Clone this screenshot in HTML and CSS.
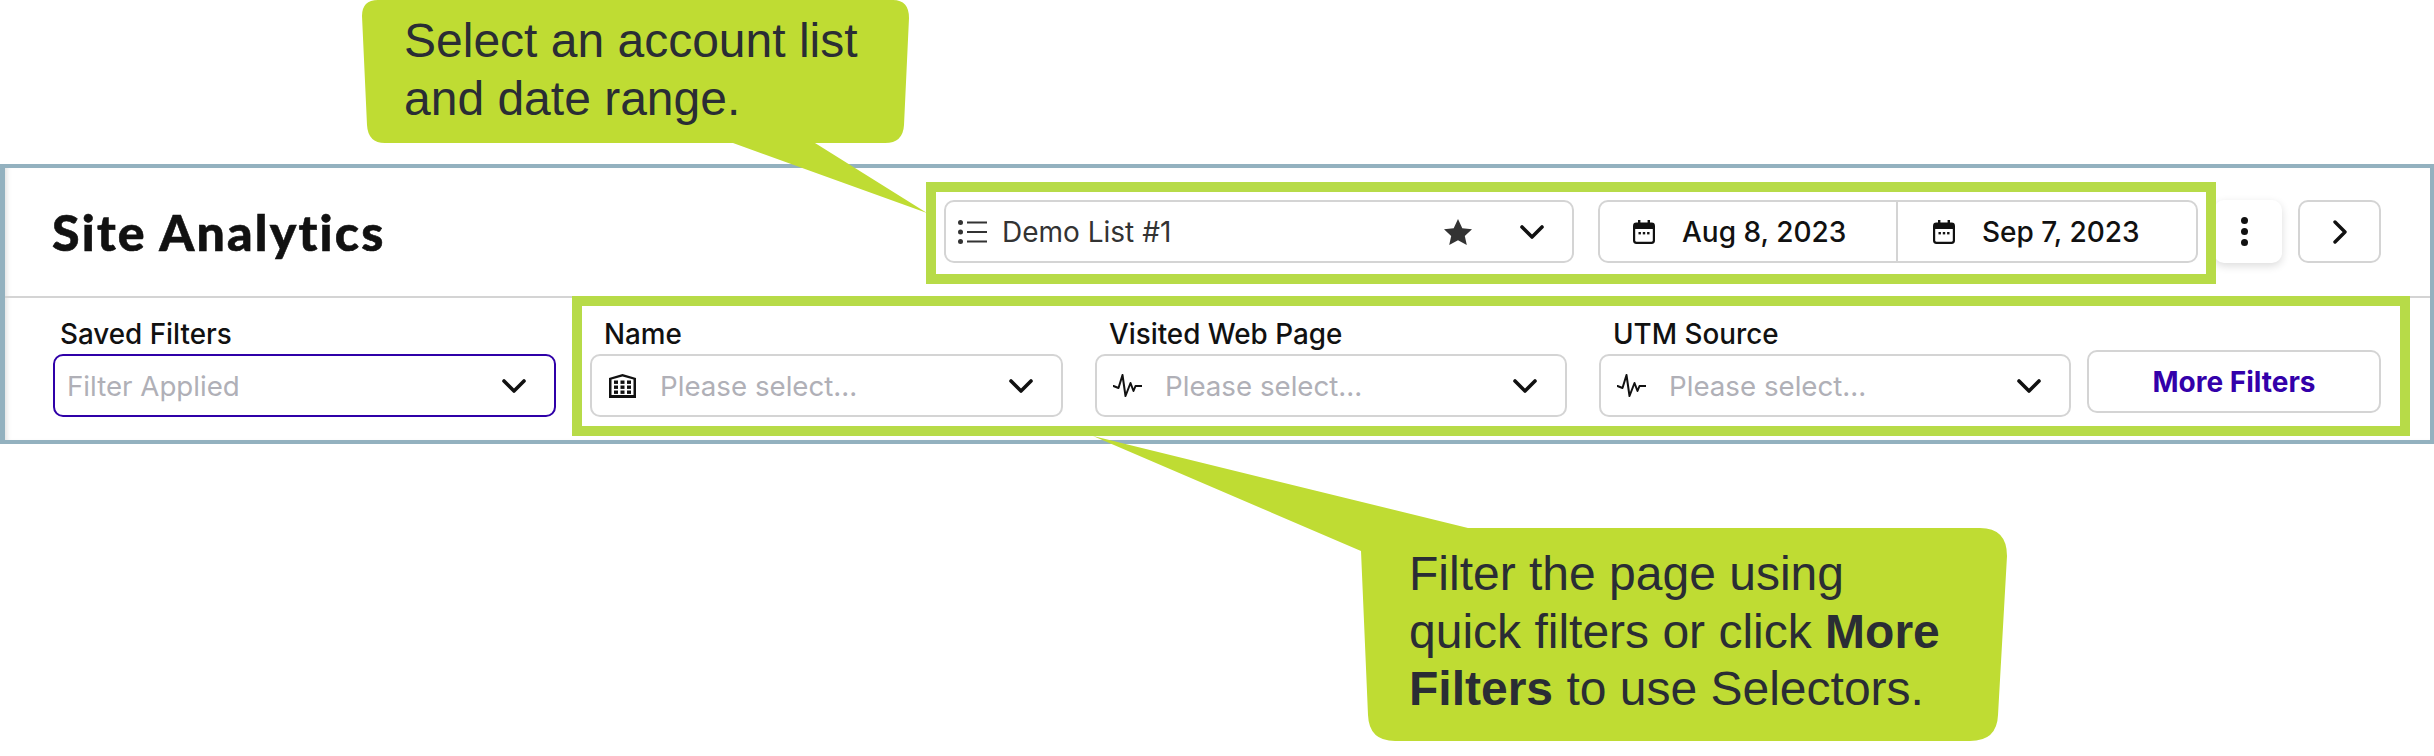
FILE: index.html
```html
<!DOCTYPE html>
<html lang="en">
<head>
<meta charset="utf-8">
<title>Site Analytics</title>
<link rel="stylesheet" href="styles.css">
</head>
<body>
<svg class="defs" width="0" height="0" aria-hidden="true">
  <symbol id="chev" viewBox="0 0 24 14"><path d="M2 2l10 10L22 2" fill="none" stroke="currentColor" stroke-width="3.6" stroke-linecap="round" stroke-linejoin="round"/></symbol>
  <symbol id="cal" viewBox="0 0 22 24"><path fill-rule="evenodd" d="M5 0h2.4v2.6h7.2V0H17v2.6h1.6A3.4 3.4 0 0 1 22 6v14.600a3.400 3.400 0 0 1-3.400 3.400H3.400A3.400 3.400 0 0 1 0 20.600V6a3.400 3.400 0 0 1 3.400-3.400H5zM2.200 9v11.600c0 .7.5 1.200 1.200 1.200h15.200c.7 0 1.200-.5 1.200-1.200V9z" fill="currentColor"/><rect x="5.500" y="12" width="2.400" height="2.400" fill="currentColor"/><rect x="9.800" y="12" width="2.400" height="2.400" fill="currentColor"/><rect x="14.100" y="12" width="2.400" height="2.400" fill="currentColor"/></symbol>
  <symbol id="pulse" viewBox="0 0 28 24"><path d="M0 12l5 2L9 1l3 21 5-13 3 8 2-5h6" fill="none" stroke="currentColor" stroke-width="2" stroke-linejoin="round" stroke-linecap="round"/></symbol>
  <symbol id="bldg" viewBox="0 0 29 24"><path fill-rule="evenodd" d="M1 24V4L14.500 0 28 4V24zM3.500 5.600V21h22V5.600L14.500 2.600z" fill="currentColor"/><g fill="currentColor"><rect x="6" y="6.500" width="4" height="3.400"/><rect x="12.500" y="6.500" width="4" height="3.400"/><rect x="19" y="6.500" width="4" height="3.400"/><rect x="6" y="11.500" width="4" height="3.400"/><rect x="12.500" y="11.500" width="4" height="3.400"/><rect x="19" y="11.500" width="4" height="3.400"/><rect x="6" y="16.500" width="4" height="3.400"/><rect x="12.500" y="16.500" width="4" height="3.400"/><rect x="19" y="16.500" width="4" height="3.400"/></g></symbol>
</svg>

<main class="page">
  <section class="panel">
    <header class="head">
      <h1 class="title">Site Analytics</h1>
      <div class="tools">
        <div class="box list-select">
          <svg class="ico-list" viewBox="0 0 29 24"><g fill="currentColor"><circle cx="2.500" cy="2.500" r="2.500"/><circle cx="2.500" cy="12" r="2.500"/><circle cx="2.500" cy="21.500" r="2.500"/><rect x="9" y="1.500" width="20" height="2"/><rect x="9" y="11" width="20" height="2"/><rect x="9" y="20.500" width="20" height="2"/></g></svg>
          <span class="list-name">Demo List #1</span>
          <svg class="ico-star" viewBox="0 0 28 26"><path d="M14 0l4.300 9.200 9.700 1.100-7.200 6.700 2 9L14 21.300 5.200 26l2-9L0 10.300l9.700-1.100z" fill="currentColor"/></svg>
          <svg class="chev chev-list"><use href="#chev"/></svg>
        </div>
        <div class="box dates">
          <div class="date date-a"><svg class="ico-cal"><use href="#cal"/></svg><span>Aug 8, 2023</span></div>
          <div class="date date-b"><svg class="ico-cal"><use href="#cal"/></svg><span>Sep 7, 2023</span></div>
        </div>
        <button class="kebab" type="button" aria-label="More"><i></i><i></i><i></i></button>
        <button class="box next" type="button" aria-label="Next"><svg viewBox="0 0 14 24"><path d="M2 2l10 10L2 22" fill="none" stroke="currentColor" stroke-width="3.400" stroke-linecap="round" stroke-linejoin="round"/></svg></button>
      </div>
    </header>
    <div class="filters">
      <div class="field field-saved">
        <label class="label label-saved">Saved Filters</label>
        <div class="box select select-saved"><span class="ph">Filter Applied</span><svg class="chev"><use href="#chev"/></svg></div>
      </div>
      <div class="field field-q field-name">
        <label class="label">Name</label>
        <div class="box select"><svg class="ico-q"><use href="#bldg"/></svg><span class="ph">Please select...</span><svg class="chev"><use href="#chev"/></svg></div>
      </div>
      <div class="field field-q">
        <label class="label">Visited Web Page</label>
        <div class="box select"><svg class="ico-q"><use href="#pulse"/></svg><span class="ph">Please select...</span><svg class="chev"><use href="#chev"/></svg></div>
      </div>
      <div class="field field-q field-last">
        <label class="label">UTM Source</label>
        <div class="box select"><svg class="ico-q"><use href="#pulse"/></svg><span class="ph">Please select...</span><svg class="chev"><use href="#chev"/></svg></div>
      </div>
      <button class="box more" type="button">More Filters</button>
    </div>
  </section>

  <div class="mark mark-top"></div>
  <div class="mark mark-filters"></div>

  <svg class="bubbles" viewBox="0 0 2434 756" aria-hidden="true">
    <path d="M378 0H893Q909 0 909 18L904 125Q903 143 885 143H815L927 213 733 143H385Q368 143 367 125L362 16Q362 0 378 0Z"/>
    <path d="M1468 528H1980Q2007 528 2007 556L1998 715Q1997 741 1970 741H1395Q1369 741 1368 715L1361 551 1093 436Z"/>
  </svg>
  <p class="note note-top">Select an account list<br>and date range.</p>
  <p class="note note-bottom">Filter the page using<br>quick filters or click <b>More</b><br><b>Filters</b> to use Selectors.</p>
</main>
</body>
</html>
```
FILE: styles.css
```css
* { box-sizing: border-box; }
html, body { margin: 0; padding: 0; background: #fff; }
body { font-family: "Inter", "Liberation Sans", sans-serif; color: #111; }
.defs { position: absolute; }
.page { position: relative; width: 2434px; height: 756px; padding-top: 164px; overflow: hidden; }

.panel { width: 2434px; height: 280px; border: solid #93b1bf; border-width: 4px 4px 4px 5px; box-shadow: inset 5px 0 5px -3px #e2e2e2; display: flex; flex-direction: column; }
.head { height: 128px; padding: 0 49px 1px 47px; display: flex; align-items: center; justify-content: space-between; }
.title { margin: 0; font-family: "Lato", sans-serif; font-weight: 900; font-size: 50px; letter-spacing: 2.2px; -webkit-text-stroke: .6px #111; color: #111; }
.tools { display: flex; align-items: center; }

.box { background: #fff; border: 2px solid #d4d4d4; border-radius: 10px; height: 63px; }
.list-select { width: 630px; display: flex; align-items: center; padding: 0 28px 0 12px; color: #333; margin-right: 24px; }
.ico-list { width: 29px; height: 24px; margin-right: 15px; }
.list-name { font-size: 28px; flex: 1; }
.ico-star { width: 28px; height: 26px; margin-right: 48px; }

.chev { width: 24px; height: 14px; color: #111; flex: none; }

.dates { width: 600px; display: flex; margin-right: 16px; }
.date { display: flex; align-items: center; font-size: 28px; font-weight: 500; color: #111; }
.date-a { width: 298px; padding-left: 33px; border-right: 2px solid #d4d4d4; }
.date-b { flex: 1; padding-left: 35px; }
.date span { margin-left: 27px; }
.ico-cal { width: 22px; height: 24px; }

.kebab { width: 68px; height: 63px; border: 0; border-radius: 10px; background: #fff; box-shadow: 0 3px 8px rgba(0, 0, 0, .14); display: flex; flex-direction: column; align-items: center; justify-content: center; gap: 4px; margin-right: 16px; padding: 0 8px 0 0; }
.kebab i { width: 7px; height: 7px; border-radius: 50%; background: #111; }
.next { width: 83px; padding: 0; display: flex; align-items: center; justify-content: center; color: #111; }
.next svg { width: 14px; height: 24px; }

.filters { flex: 1; border-top: 2px solid #d4d4d4; padding: 16px 49px 0 48px; display: flex; align-items: flex-start; }
.field { display: flex; flex-direction: column; }
.field-saved { width: 503px; margin-right: 34px; }
.field-q { width: 472px; margin-right: 32px; }
.field-name { width: 473px; }
.field-last { margin-right: 16px; }
.label { height: 40px; padding: 5px 0 0 14px; font-size: 27.8px; font-weight: 500; line-height: 30px; color: #111; white-space: nowrap; }
.label-saved { padding-left: 7px; }
.select { display: flex; align-items: center; padding: 0 28px 0 16px; }
.select-saved { border-color: #2f00a8; padding: 0 28px 0 12px; }
.ph { flex: 1; font-size: 27.7px; color: #b0b0b7; }
.ico-q { width: 29px; height: 24px; margin-right: 23px; color: #111; flex: none; }
.more { width: 294px; margin-top: 36px; padding: 0; font-family: "Inter", sans-serif; font-size: 28px; font-weight: 700; color: #3300aa; }

.mark { position: absolute; border: 10px solid #b7db48; }
.mark-top { left: 926px; top: 182px; width: 1290px; height: 102px; }
.mark-filters { left: 572px; top: 296px; width: 1838px; height: 140px; }

.bubbles { position: absolute; left: 0; top: 0; width: 2434px; height: 756px; fill: #bfdc33; }
.note { position: absolute; margin: 0; font-family: "Liberation Sans", sans-serif; font-size: 48px; line-height: 57.6px; color: #2a2d34; white-space: nowrap; }
.note-top { left: 404px; top: 12px; }
.note-bottom { left: 1409px; top: 545px; }
```
